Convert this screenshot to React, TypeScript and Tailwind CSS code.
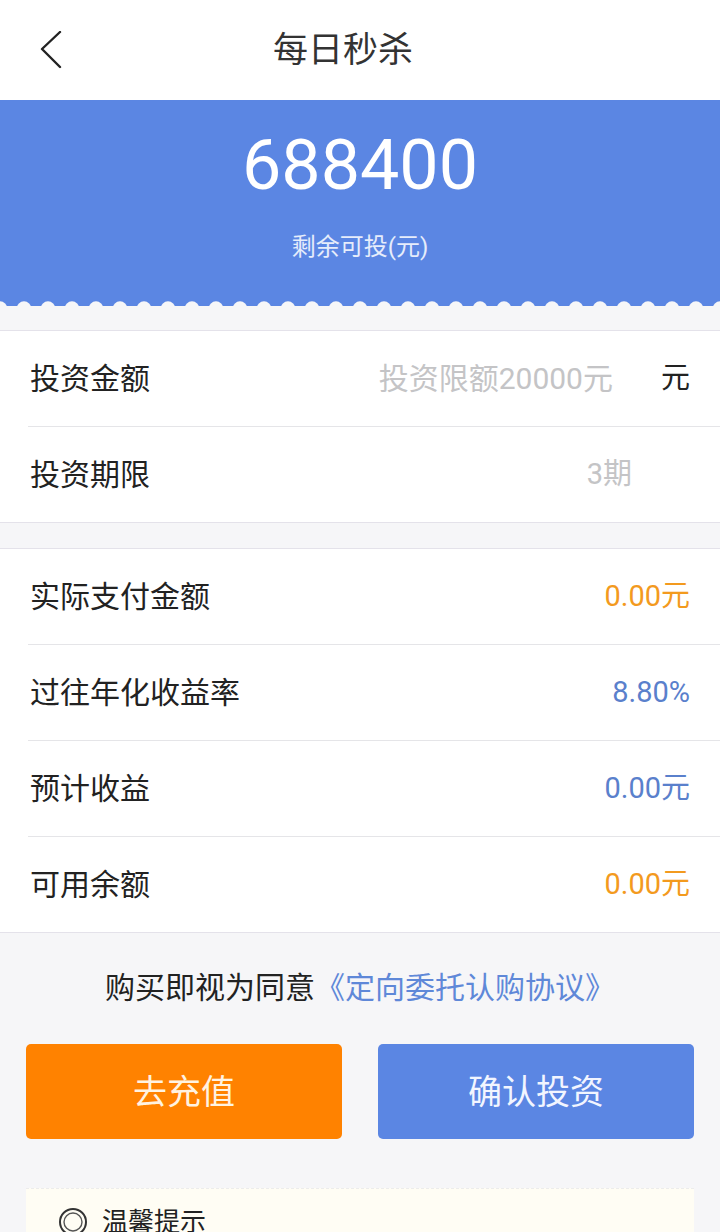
import React from "react";

const FONT = { fontFamily: 'Roboto, "Noto Sans CJK SC", sans-serif' };

function Row({
  label,
  value,
  valueClass,
  divider,
}: {
  label: string;
  value: React.ReactNode;
  valueClass?: string;
  divider?: boolean;
}) {
  return (
    <>
      <div className="flex h-[95px] items-center justify-between pl-[30px] pr-[30px]">
        <span className="text-[30px] leading-none text-[#222]">{label}</span>
        <span className={"text-[29px] leading-none " + (valueClass ?? "")}>{value}</span>
      </div>
      {divider && <div className="ml-[28px] h-px bg-[#e5e5e8]" />}
    </>
  );
}

export default function App() {
  const bumps = Array.from({ length: 32 }, (_, i) => i * 24);
  return (
    <div className="h-[1232px] w-[720px] overflow-hidden bg-[#f6f6f8]" style={FONT}>
      {/* header */}
      <div className="flex h-[100px] items-center bg-white pl-[40px]">
        <svg width="22" height="38" viewBox="0 0 22 38" className="shrink-0">
          <path d="M20 1 L2 18 L20 36" fill="none" stroke="#222" strokeWidth="2.4" strokeLinecap="round" strokeLinejoin="round" />
        </svg>
        <span className="ml-[211px] text-[35px] leading-none text-[#333]">每日秒杀</span>
      </div>

      {/* banner */}
      <div className="flex h-[200px] flex-col items-center bg-[#5b86e3]">
        <div className="pt-[30px] text-[70px] leading-none text-white">688400</div>
        <div className="mt-[35px] text-[24px] leading-[24px] text-white/85">剩余可投(元)</div>
      </div>
      <svg width="720" height="6" viewBox="0 0 720 6" className="block bg-[#5b86e3]">
        {bumps.map((x) => (
          <circle key={x} cx={x} cy={8.5} r={7.2} fill="#f6f6f8" />
        ))}
      </svg>

      {/* section 1 */}
      <div className="mt-[24px] border-y border-[#e4e2ea] bg-white">
        <div className="flex h-[95px] items-center pl-[30px] pr-[30px]">
          <span className="text-[30px] leading-none text-[#222]">投资金额</span>
          <span className="ml-auto text-[30px] leading-none text-[#c4c4c6]">投资限额20000元</span>
          <span className="ml-[48px] text-[29px] leading-none text-[#222]">元</span>
        </div>
        <div className="ml-[28px] h-px bg-[#e5e5e8]" />
        <div className="flex h-[95px] items-center pl-[30px] pr-[88px]">
          <span className="text-[30px] leading-none text-[#222]">投资期限</span>
          <span className="ml-auto text-[29px] leading-none text-[#c4c4c6]">3期</span>
        </div>
      </div>

      {/* section 2 */}
      <div className="mt-[25px] border-y border-[#e4e2ea] bg-white">
        <Row label="实际支付金额" value="0.00元" valueClass="text-[#f39a1e]" divider />
        <Row label="过往年化收益率" value="8.80%" valueClass="text-[#5a80cc]" divider />
        <Row label="预计收益" value="0.00元" valueClass="text-[#5a80cc]" divider />
        <Row label="可用余额" value="0.00元" valueClass="text-[#f39a1e]" />
      </div>

      {/* agreement */}
      <div className="pt-[40px] text-center text-[30px] leading-[30px] text-[#222]">
        购买即视为同意<span className="text-[#5f88d8]">《定向委托认购协议》</span>
      </div>

      {/* buttons */}
      <div className="mt-[41px] flex gap-[36px] px-[26px]">
        <button className="flex h-[95px] flex-1 items-center justify-center rounded-[5px] bg-[#ff8200] text-[34px] leading-none text-[#fff3e2]">
          去充值
        </button>
        <button className="flex h-[95px] flex-1 items-center justify-center rounded-[5px] bg-[#5b86e3] text-[34px] leading-none text-[#f2f5ff]">
          确认投资
        </button>
      </div>

      {/* tips */}
      <div className="mx-[26px] mt-[49px] border-t border-dashed border-[#ececec] bg-[#fffdf4] pt-[16px]">
        <div className="flex items-center pl-[32px]">
          <svg width="30" height="30" viewBox="0 0 30 30" className="shrink-0">
            <circle cx="15" cy="15" r="13" fill="none" stroke="#333" strokeWidth="2" />
            <circle cx="15" cy="15" r="9" fill="none" stroke="#555" strokeWidth="1.4" />
          </svg>
          <span className="ml-[14px] text-[26px] leading-[34px] text-[#222]">温馨提示</span>
        </div>
        <div className="h-[120px]" />
      </div>
    </div>
  );
}
